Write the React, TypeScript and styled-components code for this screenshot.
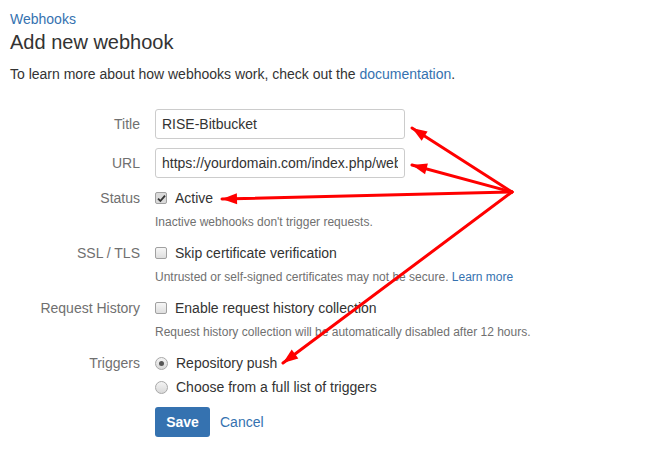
import React from 'react';
import styled, { createGlobalStyle } from 'styled-components';

const GlobalStyle = createGlobalStyle`
  html, body {
    margin: 0;
    padding: 0;
    background: #fff;
  }
  body {
    font-family: "Liberation Sans", Arial, sans-serif;
    color: #333;
  }
`;

const Page = styled.div`
  position: relative;
  width: 654px;
  height: 456px;
  padding: 10px;
  box-sizing: border-box;
  overflow: hidden;
`;

const Breadcrumb = styled.a`
  display: block;
  font-size: 14px;
  line-height: 18px;
  color: #3572b0;
  text-decoration: none;
`;

const Heading = styled.h1`
  margin: 2px 0 0;
  font-size: 20px;
  line-height: 24px;
  font-weight: normal;
  color: #333;
`;

const Intro = styled.p`
  margin: 11px 0 0;
  font-size: 14px;
  line-height: 18px;
`;

const Link = styled.a`
  color: #3572b0;
  text-decoration: none;
`;

const Form = styled.form`
  margin-top: 26px;
  display: grid;
  grid-template-columns: 130px 1fr;
  column-gap: 15px;
  align-items: center;
`;

const Label = styled.div<{ $mb?: number }>`
  grid-column: 1;
  text-align: right;
  font-size: 14px;
  line-height: 20px;
  color: #707070;
  align-self: center;
  margin-bottom: ${(p) => p.$mb ?? 0}px;
`;

const Field = styled.div<{ $mb?: number }>`
  grid-column: 2;
  margin-bottom: ${(p) => p.$mb ?? 0}px;
`;

const TextInput = styled.input`
  display: block;
  width: 250px;
  height: 30px;
  box-sizing: border-box;
  border: 1px solid #ccc;
  border-radius: 3px;
  padding: 0 6px;
  font-family: "Liberation Sans", Arial, sans-serif;
  font-size: 14px;
  color: #333;
  background: #fff;
  outline: none;
`;

const Option = styled.label`
  display: flex;
  align-items: center;
  gap: 8px;
  font-size: 14px;
  line-height: 20px;
  color: #333;
`;

const Box = styled.span<{ $checked?: boolean }>`
  width: 12px;
  height: 12px;
  box-sizing: border-box;
  border: 1px solid #a0a0a0;
  border-radius: 2px;
  background: ${(p) => (p.$checked ? '#dadada' : 'linear-gradient(#f6f6f6, #dedede)')};
  display: flex;
  align-items: center;
  justify-content: center;
`;

const Radio = styled.span<{ $checked?: boolean }>`
  width: 13px;
  height: 13px;
  box-sizing: border-box;
  border: 1px solid #a8a8a8;
  border-radius: 50%;
  background: linear-gradient(#f4f4f4, #d8d8d8);
  display: flex;
  align-items: center;
  justify-content: center;
  &::after {
    content: '';
    display: ${(p) => (p.$checked ? 'block' : 'none')};
    width: 5px;
    height: 5px;
    border-radius: 50%;
    background: #555;
  }
`;

const Help = styled.div`
  grid-column: 2;
  font-size: 12px;
  line-height: 16px;
  color: #707070;
  margin: 6px 0 13px;
`;

const Actions = styled.div`
  grid-column: 2;
  display: flex;
  align-items: center;
  gap: 10px;
  margin-top: 10px;
`;

const SaveButton = styled.button`
  height: 30px;
  width: 55px;
  border: none;
  border-radius: 3px;
  background: #3572b0;
  color: #fff;
  font-family: "Liberation Sans", Arial, sans-serif;
  font-size: 14px;
  font-weight: bold;
  cursor: pointer;
`;

const CancelLink = styled.a`
  font-size: 14px;
  color: #3572b0;
  text-decoration: none;
`;

const Overlay = styled.svg`
  position: absolute;
  left: 0;
  top: 0;
  pointer-events: none;
`;

const Check = () => (
  <svg width="9" height="9" viewBox="0 0 9 9">
    <path d="M1 4.6 L3.4 7 L8 1.6" fill="none" stroke="#333" strokeWidth="1.8" />
  </svg>
);

const origin = { x: 512, y: 192 };
const tips = [
  { x: 412, y: 128 },
  { x: 412, y: 165 },
  { x: 222, y: 199 },
  { x: 283, y: 363 },
];

function arrowHead(tip: { x: number; y: number }) {
  const dx = origin.x - tip.x;
  const dy = origin.y - tip.y;
  const len = Math.hypot(dx, dy);
  const ux = dx / len;
  const uy = dy / len;
  const L = 15;
  const W = 5.5;
  const bx = tip.x + ux * L;
  const by = tip.y + uy * L;
  return `${tip.x},${tip.y} ${bx - uy * W},${by + ux * W} ${bx + uy * W},${by - ux * W}`;
}

const App: React.FC = () => {
  return (
    <Page>
      <GlobalStyle />
      <Breadcrumb href="#">Webhooks</Breadcrumb>
      <Heading>Add new webhook</Heading>
      <Intro>
        To learn more about how webhooks work, check out the <Link href="#">documentation</Link>.
      </Intro>

      <Form onSubmit={(e) => e.preventDefault()}>
        <Label $mb={9}>Title</Label>
        <Field $mb={9}>
          <TextInput defaultValue="RISE-Bitbucket" />
        </Field>

        <Label $mb={10}>URL</Label>
        <Field $mb={10}>
          <TextInput defaultValue="https://yourdomain.com/index.php/webhooks_listener/bitbucket" />
        </Field>

        <Label>Status</Label>
        <Field>
          <Option>
            <Box $checked>
              <Check />
            </Box>
            Active
          </Option>
        </Field>
        <Help>Inactive webhooks don't trigger requests.</Help>

        <Label>SSL / TLS</Label>
        <Field>
          <Option>
            <Box />
            Skip certificate verification
          </Option>
        </Field>
        <Help>
          Untrusted or self-signed certificates may not be secure. <Link href="#">Learn more</Link>
        </Help>

        <Label>Request History</Label>
        <Field>
          <Option>
            <Box />
            Enable request history collection
          </Option>
        </Field>
        <Help>Request history collection will be automatically disabled after 12 hours.</Help>

        <Label $mb={4}>Triggers</Label>
        <Field $mb={4}>
          <Option>
            <Radio $checked />
            Repository push
          </Option>
        </Field>
        <Field>
          <Option>
            <Radio />
            Choose from a full list of triggers
          </Option>
        </Field>

        <Actions>
          <SaveButton type="submit">Save</SaveButton>
          <CancelLink href="#">Cancel</CancelLink>
        </Actions>
      </Form>

      <Overlay width="654" height="456" viewBox="0 0 654 456">
        {tips.map((t, i) => (
          <g key={i}>
            <line x1={origin.x} y1={origin.y} x2={t.x} y2={t.y} stroke="#f00" strokeWidth="3" strokeLinecap="round" />
            <polygon points={arrowHead(t)} fill="#f00" />
          </g>
        ))}
      </Overlay>
    </Page>
  );
};

export default App;
